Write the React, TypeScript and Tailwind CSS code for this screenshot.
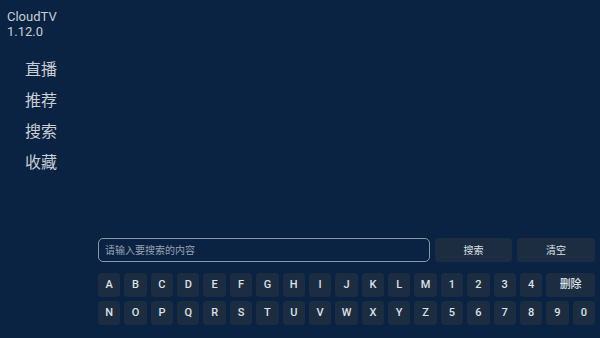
const row1 = ["A", "B", "C", "D", "E", "F", "G", "H", "I", "J", "K", "L", "M", "1", "2", "3", "4"];
const row2 = ["N", "O", "P", "Q", "R", "S", "T", "U", "V", "W", "X", "Y", "Z", "5", "6", "7", "8", "9", "0"];
const menu = ["直播", "推荐", "搜索", "收藏"];

const font = { fontFamily: "Roboto, 'Noto Sans CJK SC', sans-serif" };

function Key({ label, wide }: { label: string; wide?: boolean }) {
  return (
    <div
      className={`h-[24px] rounded-[4px] bg-[#1c2d42] text-[#dde1e6] text-[11px] font-medium flex items-center justify-center ${
        wide ? "col-span-2" : ""
      }`}
    >
      {label}
    </div>
  );
}

export default function App() {
  return (
    <div className="w-[600px] h-[338px] bg-[#0b2342] flex flex-col overflow-hidden" style={font}>
      {/* Header */}
      <div className="pl-[7px] pt-[9px] text-[13px] leading-[15px] text-[#c9ced4]">
        <div>CloudTV</div>
        <div>1.12.0</div>
      </div>

      {/* Menu */}
      <div className="pl-[25px] pt-[22px] flex flex-col gap-[13px] text-[16px] leading-[18px] text-[#c9ced4]">
        {menu.map((m) => (
          <div key={m}>{m}</div>
        ))}
      </div>

      {/* Search area */}
      <div className="mt-auto pl-[98px] pr-[5px] pb-[13px] flex flex-col">
        <div className="flex gap-[5px] h-[24px]">
          <div className="flex-1 rounded-[5px] border border-[#8596aa] flex items-center px-[6px] text-[10px] text-[#98a4b2]">
            请输入要搜索的内容
          </div>
          <div className="w-[77px] rounded-[4px] bg-[#1c2d42] text-[#dde1e6] text-[10px] flex items-center justify-center">
            搜索
          </div>
          <div className="w-[78px] rounded-[4px] bg-[#1c2d42] text-[#dde1e6] text-[10px] flex items-center justify-center">
            清空
          </div>
        </div>

        <div className="mt-[11px] grid grid-cols-[repeat(19,minmax(0,1fr))] gap-[4px]">
          {row1.map((k) => (
            <Key key={k} label={k} />
          ))}
          <Key label="删除" wide />
          {row2.map((k) => (
            <Key key={k} label={k} />
          ))}
        </div>
      </div>
    </div>
  );
}
